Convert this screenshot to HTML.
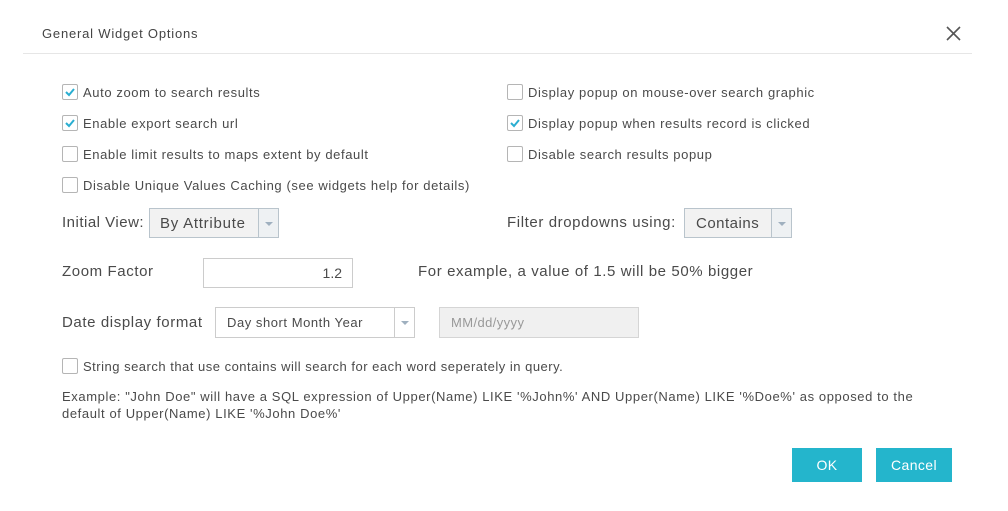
<!DOCTYPE html>
<html><head><style>
body{margin:0;width:1008px;height:511px;background:#fff;font-family:"Liberation Sans",sans-serif;color:#4a4a4a;position:relative;overflow:hidden}
.a{position:absolute;white-space:nowrap}
.cb{position:absolute;width:14px;height:14px;border:1px solid #b5b5b5;border-radius:2px;background:#fff}
.cb svg{position:absolute;left:1px;top:1px}
.t{font-size:13px;letter-spacing:0.6px}
.sel{position:absolute;border:1px solid #b9c4cc;background:#f2f2f2;box-sizing:border-box}
.sel .ar{position:absolute;right:0;top:0;bottom:0;width:19px;border-left:1px solid #b9c4cc;background:#eef1f3}
.sel .ar:after{content:"";position:absolute;left:6px;top:13px;border-left:4px solid transparent;border-right:4px solid transparent;border-top:4px solid #9fb0bf}
.btn{position:absolute;background:#24b5cc;color:#fff;font-size:14px;text-align:center;line-height:34px;height:34px;letter-spacing:0.4px}
</style></head><body>
<div class="a" style="left:42px;top:26px;font-size:13px;letter-spacing:0.8px;color:#444">General Widget Options</div>
<svg class="a" style="left:946px;top:26px" width="15" height="15"><path d="M1 1L14 14M14 1L1 14" stroke="#555" stroke-width="1.6"/></svg>
<div class="a" style="left:23px;top:53px;width:949px;height:1px;background:#e6e6e6"></div>

<div class="cb" style="left:62px;top:84px"><svg width="12" height="12"><path d="M2 6L5 9L10 3" stroke="#2aaed1" stroke-width="2" fill="none"/></svg></div>
<div class="a t" style="left:83px;top:85px">Auto zoom to search results</div>
<div class="cb" style="left:62px;top:115px"><svg width="12" height="12"><path d="M2 6L5 9L10 3" stroke="#2aaed1" stroke-width="2" fill="none"/></svg></div>
<div class="a t" style="left:83px;top:116px">Enable export search url</div>
<div class="cb" style="left:62px;top:146px"></div>
<div class="a t" style="left:83px;top:147px">Enable limit results to maps extent by default</div>
<div class="cb" style="left:62px;top:177px"></div>
<div class="a t" style="left:83px;top:178px">Disable Unique Values Caching (see widgets help for details)</div>

<div class="cb" style="left:507px;top:84px"></div>
<div class="a t" style="left:528px;top:85px">Display popup on mouse-over search graphic</div>
<div class="cb" style="left:507px;top:115px"><svg width="12" height="12"><path d="M2 6L5 9L10 3" stroke="#2aaed1" stroke-width="2" fill="none"/></svg></div>
<div class="a t" style="left:528px;top:116px">Display popup when results record is clicked</div>
<div class="cb" style="left:507px;top:146px"></div>
<div class="a t" style="left:528px;top:147px">Disable search results popup</div>

<div class="a" style="left:62px;top:214px;font-size:15px;letter-spacing:0.5px">Initial View:</div>
<div class="sel" style="left:149px;top:208px;width:130px;height:30px"><span class="a" style="left:10px;top:6px;font-size:15px;letter-spacing:0.75px">By Attribute</span><div class="ar"></div></div>
<div class="a" style="left:507px;top:214px;font-size:15px;letter-spacing:0.6px">Filter dropdowns using:</div>
<div class="sel" style="left:684px;top:208px;width:108px;height:30px"><span class="a" style="left:11px;top:6px;font-size:15px;letter-spacing:0.5px">Contains</span><div class="ar"></div></div>

<div class="a" style="left:62px;top:263px;font-size:15px;letter-spacing:0.6px">Zoom Factor</div>
<div class="a" style="left:203px;top:258px;width:148px;height:28px;border:1px solid #ccc"><span class="a" style="right:10px;top:6px;font-size:14px">1.2</span></div>
<div class="a" style="left:418px;top:263px;font-size:15px;letter-spacing:0.6px">For example, a value of 1.5 will be 50% bigger</div>

<div class="a" style="left:62px;top:314px;font-size:15px;letter-spacing:0.6px">Date display format</div>
<div class="sel" style="left:215px;top:307px;width:200px;height:31px;background:#fff;border-color:#ccc"><span class="a" style="left:11px;top:7px;font-size:13px;letter-spacing:0.55px">Day short Month Year</span><div class="ar" style="background:#fff;border-color:#ccc"></div></div>
<div class="a" style="left:439px;top:307px;width:198px;height:29px;border:1px solid #d5d5d5;background:#f0f0f0"><span class="a" style="left:11px;top:7px;font-size:13px;color:#999;letter-spacing:0.4px">MM/dd/yyyy</span></div>

<div class="cb" style="left:62px;top:358px"></div>
<div class="a t" style="left:83px;top:359px;letter-spacing:0.5px">String search that use contains will search for each word seperately in query.</div>
<div class="a" style="left:62px;top:388px;font-size:13px;line-height:17px;letter-spacing:0.6px">Example: "John Doe" will have a SQL expression of Upper(Name) LIKE '%John%' AND Upper(Name) LIKE '%Doe%' as opposed to the<br>default of Upper(Name) LIKE '%John Doe%'</div>

<div class="btn" style="left:792px;top:448px;width:70px">OK</div>
<div class="btn" style="left:876px;top:448px;width:76px">Cancel</div>
</body></html>
